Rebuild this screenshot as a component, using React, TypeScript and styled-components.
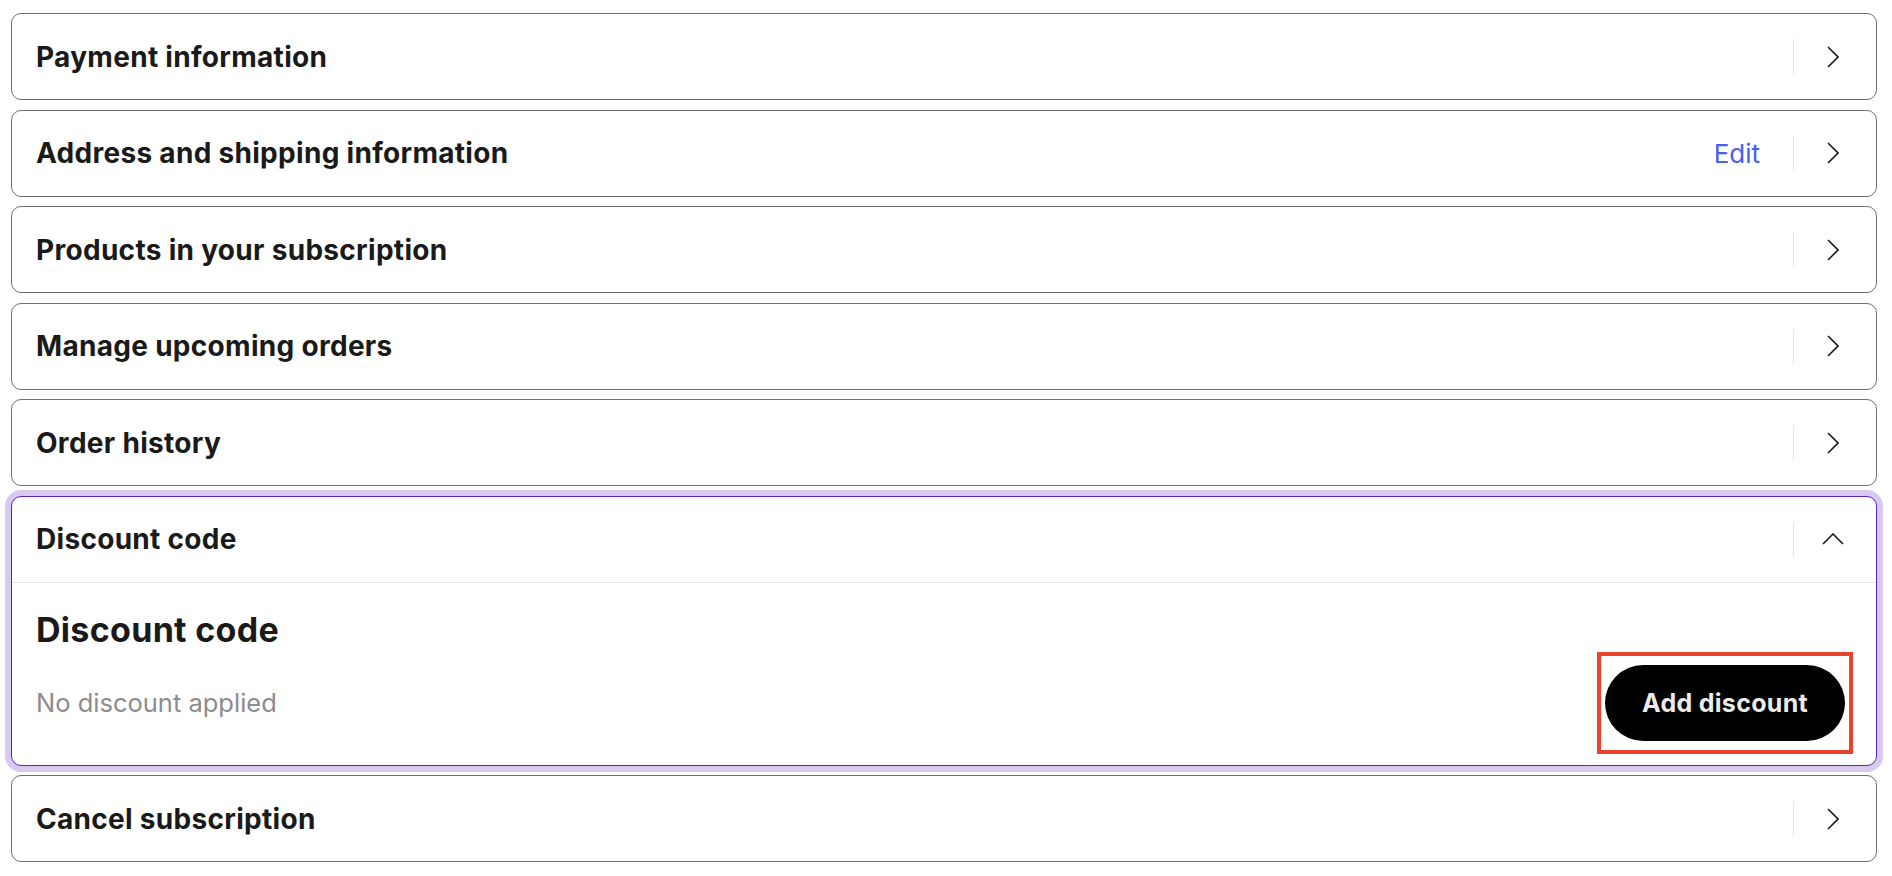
import React from 'react';
import styled, { createGlobalStyle } from 'styled-components';

const GlobalStyle = createGlobalStyle`
  html, body {
    margin: 0;
    padding: 0;
    background: #ffffff;
  }
  body {
    font-family: 'Inter', 'Liberation Sans', sans-serif;
    color: #1a1a1a;
  }
`;

const Page = styled.div`
  display: flex;
  flex-direction: column;
  gap: 9.5px;
  padding: 13px 15px 13px 11px;
`;

const Card = styled.section<{ $open?: boolean }>`
  display: flex;
  flex-direction: column;
  background: #fff;
  border: ${({ $open }) => ($open ? '1.5px solid #5b25c4' : '1px solid #6e7275')};
  border-radius: 10px;
  box-shadow: ${({ $open }) => ($open ? '0 0 0 6px #d7c9ef' : 'none')};
`;

const Header = styled.div<{ $open?: boolean }>`
  display: flex;
  align-items: center;
  height: 85px;
  padding-left: 24px;
  border-bottom: ${({ $open }) => ($open ? '1px solid #e6e6e6' : 'none')};
`;

const Title = styled.h2`
  flex: 1;
  margin: 0;
  font-family: 'Inter', 'Liberation Sans', sans-serif;
  font-size: 28px;
  font-weight: 700;
  letter-spacing: 0.3px;
  color: #1a1a1a;
`;

const EditLink = styled.a`
  font-family: 'Inter', 'Liberation Sans', sans-serif;
  font-size: 26px;
  color: #4361ee;
  cursor: pointer;
`;

const Divider = styled.span`
  width: 1px;
  height: 35px;
  margin-left: 33px;
  background: #e6e6e6;
`;

const IconBox = styled.span`
  display: flex;
  align-items: center;
  justify-content: center;
  width: 22px;
  height: 22px;
  margin: 0 32px 0 28px;
`;

const Body = styled.div`
  display: flex;
  flex-direction: column;
  padding: 27px 23px 11px 24px;
`;

const BodyTitle = styled.h3`
  margin: 0;
  font-family: 'Inter', 'Liberation Sans', sans-serif;
  font-size: 34px;
  line-height: 40px;
  font-weight: 700;
  letter-spacing: 0.3px;
  color: #1a1a1a;
`;

const BodyRow = styled.div`
  display: flex;
  align-items: center;
  justify-content: space-between;
  margin-top: 2px;
`;

const Muted = styled.span`
  font-family: 'Inter', 'Liberation Sans', sans-serif;
  font-size: 25.5px;
  color: #8c8c8c;
`;

const Highlight = styled.span`
  display: inline-flex;
  padding: 9px 4px;
  border: 4px solid #e8432d;
`;

const PillButton = styled.button`
  width: 240px;
  height: 76px;
  border: none;
  border-radius: 38px;
  background: #000;
  color: #ececec;
  font-family: 'Inter', 'Liberation Sans', sans-serif;
  font-size: 25px;
  font-weight: 700;
  letter-spacing: 0.3px;
  cursor: pointer;
`;

const ChevronRight = () => (
  <svg width="12" height="22" viewBox="0 0 12 22" fill="none">
    <polyline points="1,1 11,11 1,21" stroke="#1a1a1a" strokeWidth="1.6" />
  </svg>
);

const ChevronUp = () => (
  <svg width="22" height="12" viewBox="0 0 22 12" fill="none">
    <polyline points="1,11 11,1 21,11" stroke="#1a1a1a" strokeWidth="1.6" />
  </svg>
);

const sections = [
  { title: 'Payment information' },
  { title: 'Address and shipping information', edit: true },
  { title: 'Products in your subscription' },
  { title: 'Manage upcoming orders' },
  { title: 'Order history' },
];

const Row = ({ title, edit }: { title: string; edit?: boolean }) => (
  <Card>
    <Header>
      <Title>{title}</Title>
      {edit && <EditLink>Edit</EditLink>}
      <Divider />
      <IconBox>
        <ChevronRight />
      </IconBox>
    </Header>
  </Card>
);

export default function App() {
  return (
    <>
      <GlobalStyle />
      <Page>
        {sections.map((s) => (
          <Row key={s.title} title={s.title} edit={s.edit} />
        ))}
        <Card $open>
          <Header $open>
            <Title>Discount code</Title>
            <Divider />
            <IconBox>
              <ChevronUp />
            </IconBox>
          </Header>
          <Body>
            <BodyTitle>Discount code</BodyTitle>
            <BodyRow>
              <Muted>No discount applied</Muted>
              <Highlight>
                <PillButton>Add discount</PillButton>
              </Highlight>
            </BodyRow>
          </Body>
        </Card>
        <Row title="Cancel subscription" />
      </Page>
    </>
  );
}
